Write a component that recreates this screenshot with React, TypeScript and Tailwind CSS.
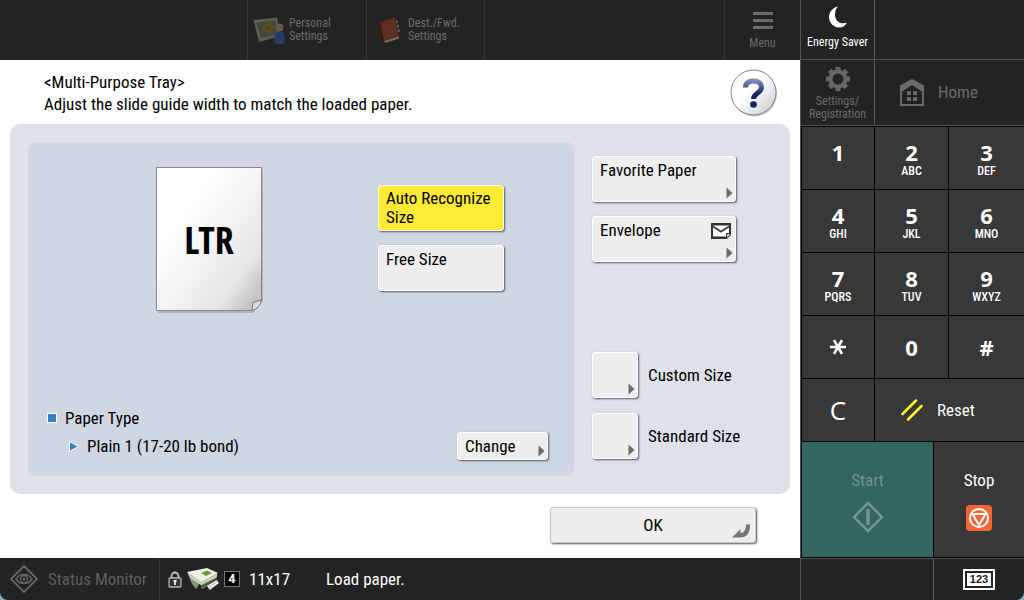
import { Asterisk } from "lucide-react";
import type { ReactNode } from "react";

const raised =
  "relative rounded-[3px] border border-white bg-[#eeeeee] text-left text-black shadow-[1px_1px_2px_#555a66] cursor-pointer";

const keys = [
  { digit: "1", letters: "" },
  { digit: "2", letters: "ABC" },
  { digit: "3", letters: "DEF" },
  { digit: "4", letters: "GHI" },
  { digit: "5", letters: "JKL" },
  { digit: "6", letters: "MNO" },
  { digit: "7", letters: "PQRS" },
  { digit: "8", letters: "TUV" },
  { digit: "9", letters: "WXYZ" },
];

const Arrow = () => (
  <svg className="absolute right-0.5 bottom-0.5" width="7" height="12" viewBox="0 0 7 12" aria-hidden="true">
    <path d="M0.500 0.500 6.500 6l-6 5.500z" fill="#6b6b6b" />
  </svg>
);

const PersonalIcon = () => (
  <svg width="32" height="30" viewBox="0 0 32 30" aria-hidden="true">
    <path d="M0.500 5 24 2.500l4 18.500L6 27z" fill="#5c5d55" />
    <path d="M3.500 7.500 22.500 5.500l3 13.500L8 23z" fill="#44483a" />
    <circle cx="15" cy="12.500" r="3.500" fill="none" stroke="#5f4d17" strokeWidth="2" />
    <circle cx="15" cy="12.500" r="5" fill="none" stroke="#5f4d17" strokeWidth="2" strokeDasharray="2 1.140" />
    <circle cx="26.500" cy="12.500" r="4" fill="#685743" />
    <path d="M21.500 20c0-2 2-3.500 5-3.500s5 1.500 5 3.500v7.500c-2 2-8 2-10 0z" fill="#293a66" />
  </svg>
);

const BookIcon = () => (
  <svg width="24" height="28" viewBox="0 0 24 28" aria-hidden="true">
    <path d="M1 6 18 1l4.500 20L6 27z" fill="#4b2418" />
    <path d="M4 6 17.500 2l4 18.500L7 25z" fill="#5c2f20" />
    <path d="m7.500 25 14.500-4.500v2L8 27z" fill="#77706c" />
    <path d="m19.500 4.500.6 2.500M20.500 9l.6 2.500M21.500 13.500l.6 2.500" stroke="#6c6c58" strokeWidth="1.500" />
    <path d="m2 7 4 19" stroke="#351a12" strokeWidth="1.500" />
  </svg>
);

const HelpIcon = () => (
  <svg width="48" height="48" viewBox="0 0 48 48" aria-hidden="true">
    <defs>
      <linearGradient id="helpFace" x1="0" y1="0" x2="1" y2="1">
        <stop offset="0.450" stopColor="#ffffff" />
        <stop offset="1" stopColor="#c3c6ce" />
      </linearGradient>
      <linearGradient id="helpMark" x1="0" y1="0" x2="0" y2="1">
        <stop offset="0" stopColor="#7c86b8" />
        <stop offset="0.700" stopColor="#142468" />
      </linearGradient>
    </defs>
    <circle cx="24.500" cy="25" r="22.500" fill="#c9c9cc" />
    <circle cx="23.500" cy="23.500" r="22.500" fill="url(#helpFace)" stroke="#808289" />
    <path d="M15.500 18.500c0-4.500 3.200-6.500 8-6.500 5 0 8 2.500 8 6.500 0 5.500-8 5.500-8 11.500" fill="none" stroke="url(#helpMark)" strokeWidth="5" />
    <circle cx="23.500" cy="35.500" r="3.300" fill="#142468" />
  </svg>
);

const MenuIcon = () => (
  <svg width="20" height="17" viewBox="0 0 20 17" aria-hidden="true">
    <path d="M0 1.500h20M0 8.500h20M0 15.500h20" stroke="#6b6b6b" strokeWidth="3" />
  </svg>
);

const MoonIcon = () => (
  <svg width="20" height="22" viewBox="0 0 20 22" aria-hidden="true">
    <path d="M10 0.500C5 1.500 1 6 1 11.500a10 10 0 0 0 10 10c4 0 6.500-2 8-5-6 2.500-12-1-12-8C7 5 8 2.500 10 .5z" fill="#fff" />
  </svg>
);

const GearIcon = () => (
  <svg width="24" height="24" viewBox="0 0 24 24" aria-hidden="true">
    <circle cx="12" cy="12" r="7.500" fill="none" stroke="#666" strokeWidth="4" />
    <path
      d="M12 0v4M12 20v4M0 12h4M20 12h4M3.500 3.500l3 3M17.500 17.500l3 3M3.500 20.500l3-3M17.500 6.500l3-3"
      stroke="#666"
      strokeWidth="5"
    />
  </svg>
);

const HomeIcon = () => (
  <svg width="24" height="27" viewBox="0 0 24 27" aria-hidden="true">
    <path d="M0 6.500 12 0l12 6.500V27H0zM2 12.500V25h20V12.500L12 6z" fill="#6b6b6b" fillRule="evenodd" />
    <path d="M7 12h4v4H7zM13 12h4v4h-4zM7 18h4v4H7zM13 18h4v4h-4z" fill="#6b6b6b" />
  </svg>
);

const PaperSheet = () => (
  <svg width="110" height="148" viewBox="0 0 110 148" aria-hidden="true">
    <defs>
      <linearGradient id="sheet" x1="0" y1="0" x2="1" y2="1">
        <stop offset="0.300" stopColor="#ffffff" />
        <stop offset="0.780" stopColor="#e6e6e6" />
        <stop offset="0.920" stopColor="#c4c4c4" />
      </linearGradient>
    </defs>
    <path d="M2 2h105v132l-10 12H2z" fill="#aeb3be" />
    <path d="M.5.5h105V133l-9 10.500H.5z" fill="url(#sheet)" stroke="#85878b" />
    <path d="m96 143.500 1-8 8.500-2.500c-1 5-4 9-9.500 10.500z" fill="#dedede" stroke="#777" />
  </svg>
);

const EnvelopeIcon = () => (
  <svg className="absolute top-1.5 right-1" width="20" height="16" viewBox="0 0 20 16" aria-hidden="true">
    <path d="M0 0h20v12l-4 4H0z" fill="#333" />
    <path d="M2 2.500h16V10h-3v3.500H2z" fill="#fff" />
    <path d="m2 3.500 8 5 8-5" fill="none" stroke="#444" strokeWidth="2" />
    <path d="M16 15v-4h3.500z" fill="#fff" stroke="#444" strokeWidth="0.600" />
  </svg>
);

const StatusIcon = () => (
  <svg width="28" height="28" viewBox="0 0 28 28" aria-hidden="true" fill="none" stroke="#666">
    <path d="M14 1 27 14 14 27 1 14z" strokeWidth="1.800" />
    <path d="M6 14c4-6 12-6 16 0-4 6-12 6-16 0z" strokeWidth="1.500" />
    <circle cx="14" cy="14" r="3.500" strokeWidth="1.300" />
    <circle cx="14" cy="14" r="1.500" fill="#666" stroke="none" />
  </svg>
);

const LockIcon = () => (
  <svg width="14" height="17" viewBox="0 0 14 17" aria-hidden="true">
    <path d="M3.500 8V5a3.500 3.500 0 0 1 7 0v3" fill="none" stroke="#c4c4c4" strokeWidth="1.800" />
    <rect x="1" y="7" width="12" height="9" rx="1" fill="#333" stroke="#b5b5b5" strokeWidth="1.300" />
    <path d="M7 9v5M5.500 10h3" stroke="#eee" strokeWidth="1.800" />
  </svg>
);

const PrinterIcon = () => (
  <svg width="32" height="24" viewBox="0 0 32 24" aria-hidden="true">
    <path d="m0 5 5 12 4 5 4-6 2 6 14-8 1-8z" fill="#83927a" />
    <path d="M0 5 20 1l11 5-17 9z" fill="#eef1e3" />
    <path d="m14 6 6-2.500 5 2.500-6 3z" fill="#609c3d" />
    <path d="m1 6 13 9 16-8v3l-16 8L4 12z" fill="#c7d1b8" />
    <path d="m14 19 15-8v3l-14 7z" fill="#4c573f" />
    <path d="m20 19 10-6 2 3-9 7z" fill="#fff" />
    <path d="m22 20 9-6M23 22l8-5" stroke="#777" strokeWidth="0.700" />
  </svg>
);

const EnterIcon = () => (
  <svg className="absolute right-[5px] bottom-1" width="18" height="14" viewBox="0 0 18 14" aria-hidden="true">
    <path d="M0 13.500 8.500 5v4c3.500 0 5.500-3 5.500-8.500h4c0 9-3.500 13-9.500 13z" fill="#777" />
  </svg>
);

const StartIcon = () => (
  <svg width="32" height="32" viewBox="0 0 32 32" aria-hidden="true" fill="none" stroke="#75938f">
    <path d="M16 2 30 16 16 30 2 16z" strokeWidth="2.500" />
    <path d="M16 8v16" strokeWidth="3.500" />
  </svg>
);

const StopIcon = () => (
  <svg width="26" height="26" viewBox="0 0 26 26" aria-hidden="true">
    <rect width="26" height="26" rx="4" fill="#f96532" />
    <circle cx="13" cy="13" r="9" fill="none" stroke="#fff" strokeWidth="2" />
    <path d="M6.500 9h13L13 20z" fill="none" stroke="#fff" strokeWidth="2" />
  </svg>
);

const SizeLink = ({ id, label }: { id: string; label: string }) => (
  <div className="flex items-center gap-2.5">
    <button id={id} aria-labelledby={`${id}-label`} className={`${raised} size-[46px]`}>
      <Arrow />
    </button>
    <label id={`${id}-label`} htmlFor={id}>
      {label}
    </label>
  </div>
);

const Key = ({ children }: { children: ReactNode }) => (
  <button className="flex h-[62px] flex-col items-center justify-center bg-[#383838] text-white">{children}</button>
);

const App = () => {
  return (
    <div className="min-h-screen bg-[#8ba9cb] font-['Roboto_Condensed','Liberation_Sans_Narrow',sans-serif] text-[17px] leading-[22px] text-black">
      <div className="flex min-h-screen overflow-hidden rounded-b-lg bg-[#232323]">
        <main className="flex min-w-0 flex-1 flex-col">
          <header className="flex h-[60px] justify-end text-xs leading-[13px] text-[#6b6b6b]">
            <button className="flex w-[119px] items-center gap-1 border-l border-[#353535] pl-[5px] text-left">
              <PersonalIcon />
              <span>
                Personal
                <br />
                Settings
              </span>
            </button>
            <button className="flex w-[119px] items-center gap-[7px] border-x border-[#353535] pl-2.5 text-left">
              <BookIcon />
              <span>
                Dest./Fwd.
                <br />
                Settings
              </span>
            </button>
            <button className="ml-[239px] flex w-[76px] flex-col items-center gap-2 border-l border-[#353535] pt-3">
              <MenuIcon />
              Menu
            </button>
          </header>

          <section className="flex flex-1 flex-col bg-white px-2.5">
            <div className="flex h-16 items-center justify-between pt-0.5 pr-3 pl-[34px]">
              <h1>
                &lt;Multi-Purpose Tray&gt;
                <br />
                Adjust the slide guide width to match the loaded paper.
              </h1>
              <button aria-label="Help">
                <HelpIcon />
              </button>
            </div>

            <div className="flex h-[370px] gap-[18px] rounded-[10px] bg-[#dee1ea] p-[18px]">
              <div className="flex flex-1 flex-col justify-between rounded-lg bg-[#d0d6e2] pt-[25px] pr-[26px] pb-4 pl-5">
                <div className="flex justify-between pr-11 pl-[108px]">
                  <div className="relative">
                    <PaperSheet />
                    <span className="absolute inset-x-0 top-[52px] pr-1 text-center font-['Open_Sans_Condensed',sans-serif] text-[38px] leading-10 font-bold">
                      LTR
                    </span>
                  </div>
                  <div className="flex flex-col gap-3.5 pt-[18px]">
                    <button className={`${raised} h-[46px] w-[126px] bg-[#ffec32] px-[7px] leading-[19px]`}>
                      Auto Recognize Size
                    </button>
                    <button className={`${raised} flex h-[46px] w-[126px] items-start px-[7px] pt-1 leading-[19px]`}>
                      Free Size
                    </button>
                  </div>
                </div>
                <div className="flex items-end justify-between">
                  <div className="flex flex-col gap-1.5 pb-[3px]">
                    <h2 className="flex items-center gap-[9px]">
                      <span className="size-2 bg-[#397fc4] outline outline-white" />
                      Paper Type
                    </h2>
                    <p className="flex items-center gap-2 pl-[21px]">
                      <svg width="10" height="11" viewBox="0 0 10 11" aria-hidden="true">
                        <path d="M.5.5 9.500 5.500l-9 5z" fill="#397fc4" stroke="#fff" />
                      </svg>
                      Plain 1 (17-20 lb bond)
                    </p>
                  </div>
                  <button className={`${raised} h-7 w-[91px] px-[7px]`}>
                    Change
                    <Arrow />
                  </button>
                </div>
              </div>

              <div className="flex w-[180px] flex-col pt-3.5">
                <button className={`${raised} flex h-[46px] w-36 items-start px-[7px] pt-1 leading-[19px]`}>
                  Favorite Paper
                  <Arrow />
                </button>
                <button className={`${raised} mt-3.5 flex h-[46px] w-36 items-start px-[7px] pt-1 leading-[19px]`}>
                  Envelope
                  <EnvelopeIcon />
                  <Arrow />
                </button>
                <div className="mt-auto flex flex-col gap-[15px] pb-[17px]">
                  <SizeLink id="custom" label="Custom Size" />
                  <SizeLink id="standard" label="Standard Size" />
                </div>
              </div>
            </div>

            <div className="flex justify-end pt-[13px] pr-[34px] pb-3.5">
              <button className="relative h-9 w-[206px] rounded-[3px] border border-[#c8c8c8] bg-[#eeeeee] shadow-[1px_1px_2px_#555a66]">
                OK
                <EnterIcon />
              </button>
            </div>
          </section>

          <footer className="flex h-[42px] items-center text-white">
            <button className="flex h-full w-40 items-center gap-2.5 border-r border-[#353535] pl-2.5 text-[#5f5f5f]">
              <StatusIcon />
              Status Monitor
            </button>
            <div className="flex items-center gap-[5px] pl-2">
              <LockIcon />
              <PrinterIcon />
              <span className="flex size-4 items-center justify-center border border-[#777] bg-black font-['Open_Sans',sans-serif] text-xs font-bold">
                4
              </span>
              <span className="pl-1">11x17</span>
            </div>
            <p className="pl-9">Load paper.</p>
          </footer>
        </main>

        <aside className="flex w-56 shrink-0 flex-col border-l border-[#555]">
          <div className="grid grid-cols-[73px_1fr] gap-px border-b border-[#555] bg-[#555] text-xs leading-[13px]">
            <button className="flex h-[59px] flex-col items-center gap-2 bg-[#232323] pt-1.5 text-white">
              <MoonIcon />
              Energy Saver
            </button>
            <div className="bg-[#232323]" />
            <button className="flex h-[65px] flex-col items-center gap-1 bg-[#232323] pt-[7px] text-[#6b6b6b]">
              <GearIcon />
              <span>
                Settings/
                <br />
                Registration
              </span>
            </button>
            <button className="flex items-center gap-3.5 bg-[#232323] pl-[25px] text-[17px] text-[#6b6b6b]">
              <HomeIcon />
              Home
            </button>
          </div>

          <div className="flex flex-1 flex-col gap-px bg-black pt-px pb-px pl-px">
            <div className="grid grid-cols-[72px_73px_1fr] gap-px">
              {keys.map((key) => (
                <Key key={key.digit}>
                  <span className="pt-0.5 font-['Open_Sans',sans-serif] text-[22px] leading-6 font-bold">
                    {key.digit}
                  </span>
                  <span className="h-3.5 text-xs leading-[14px] font-medium">{key.letters}</span>
                </Key>
              ))}
              <Key>
                <Asterisk className="rotate-90" size={32} strokeWidth={2} strokeLinecap="butt" aria-label="*" />
              </Key>
              <Key>
                <span className="font-['Open_Sans',sans-serif] text-[22px] font-bold">0</span>
              </Key>
              <Key>
                <span className="font-['Open_Sans',sans-serif] text-[22px] font-bold">#</span>
              </Key>
              <Key>
                <span className="font-['Open_Sans',sans-serif] text-[26px]">C</span>
              </Key>
              <button className="col-span-2 flex items-center gap-3.5 bg-[#383838] pl-[26px] text-white">
                <svg width="22" height="22" viewBox="0 0 22 22" aria-hidden="true">
                  <path d="M1.500 15 15 1.500M7 20.500 20.500 7" stroke="#ffff2e" strokeWidth="2.500" strokeLinecap="round" />
                </svg>
                Reset
              </button>
            </div>
            <div className="grid flex-1 grid-cols-[131px_1fr] gap-px">
              <button className="flex flex-col items-center justify-center gap-2.5 bg-[#33665e] pt-0.5 text-[#75938f]">
                Start
                <StartIcon />
              </button>
              <button className="flex flex-col items-center justify-center gap-3.5 bg-[#383838] text-white">
                Stop
                <StopIcon />
              </button>
            </div>
          </div>

          <div className="flex h-[42px] justify-end border-t border-[#555]">
            <button className="flex w-[91px] items-center justify-center border-l border-[#555]">
              <span className="border-2 border-white p-0.5">
                <span className="block bg-white px-[3px] font-['Liberation_Sans',sans-serif] text-[11px] leading-[13px] font-bold text-[#232323]">
                  123
                </span>
              </span>
            </button>
          </div>
        </aside>
      </div>
    </div>
  );
};

export default App;
